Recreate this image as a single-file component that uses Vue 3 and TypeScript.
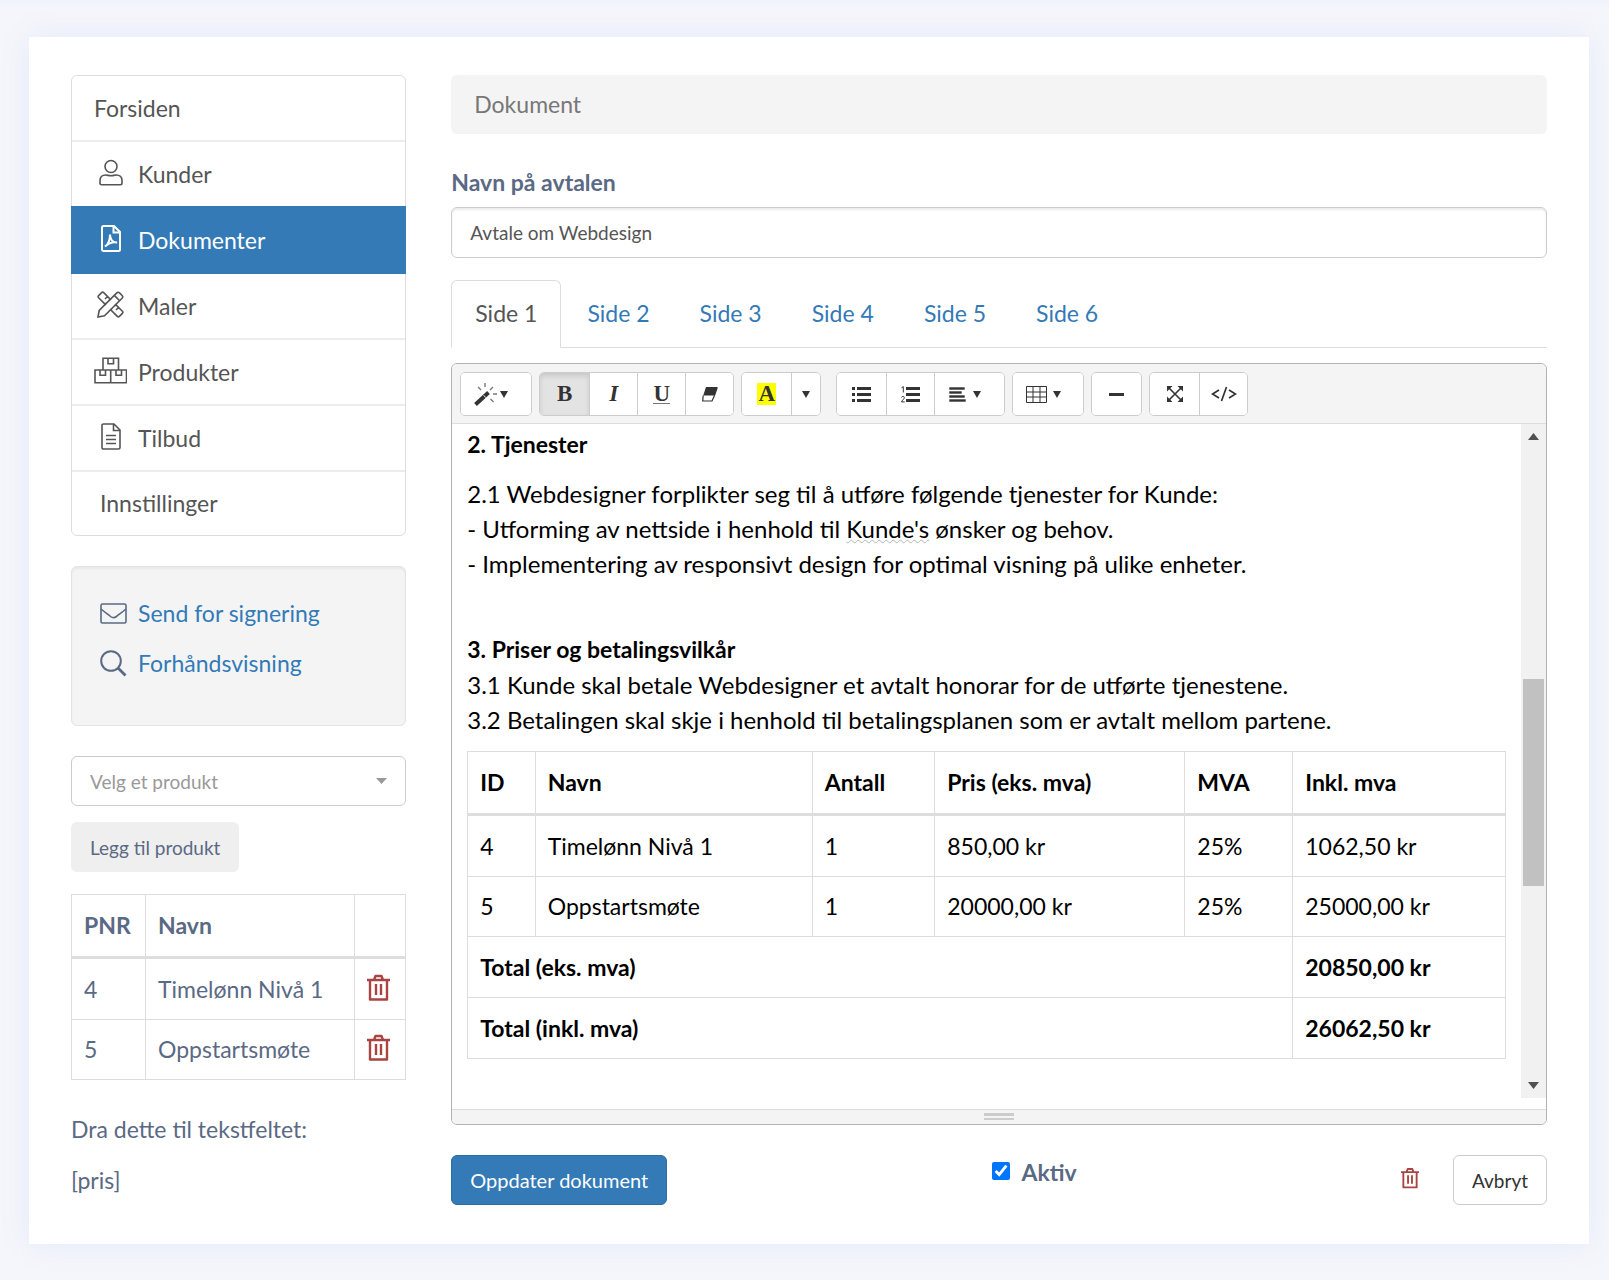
<script setup lang="ts">
import { ref } from 'vue'

interface NavItem {
  label: string
  icon?: string
}
interface Product {
  id: number
  name: string
  qty: number
  price: string
  vat: string
  total: string
}

const navItems: NavItem[] = [
  { label: 'Forsiden' },
  { label: 'Kunder', icon: 'user' },
  { label: 'Dokumenter', icon: 'pdf' },
  { label: 'Maler', icon: 'tools' },
  { label: 'Produkter', icon: 'boxes' },
  { label: 'Tilbud', icon: 'file' },
  { label: 'Innstillinger' },
]
const activeNav = ref('Dokumenter')

const pages = ['Side 1', 'Side 2', 'Side 3', 'Side 4', 'Side 5', 'Side 6']
const activePage = ref('Side 1')

const products: Product[] = [
  { id: 4, name: 'Timelønn Nivå 1', qty: 1, price: '850,00 kr', vat: '25%', total: '1062,50 kr' },
  { id: 5, name: 'Oppstartsmøte', qty: 1, price: '20000,00 kr', vat: '25%', total: '25000,00 kr' },
]

const agreementName = ref('Avtale om Webdesign')
const chosenProduct = ref('')
const active = ref(true)
const bold = ref(true)
</script>

<template>
  <svg class="sprite" aria-hidden="true">
    <symbol id="trash" viewBox="0 0 23 27">
      <path d="M0 6h23M7 6l1.500-4h6L16 6M3 6v19.500h17V6M9 10v11M14 10v11" fill="none" stroke="currentColor" stroke-width="2.400" stroke-linejoin="round" />
    </symbol>
    <symbol id="caret" viewBox="0 0 8 7"><path d="M0 0h8L4 7z" fill="currentColor" /></symbol>
  </svg>

  <main class="card">
    <aside class="side">
      <nav class="nav" aria-label="Meny">
        <a
          v-for="item in navItems"
          :key="item.label"
          href="#"
          class="nav-item"
          :class="{ active: item.label === activeNav, last: item.label === 'Innstillinger' }"
          @click.prevent="activeNav = item.label"
        >
          <span v-if="item.icon" class="nav-icon">
            <svg v-if="item.icon === 'user'" width="24" height="27" viewBox="0 0 24 27">
              <circle cx="12" cy="7.500" r="6" />
              <path d="M1 24v-2.500C1 18 3.500 16 6.500 16c2 0 3 .8 5.500.8s3.500-.8 5.500-.8c3 0 5.500 2 5.500 5.500V24c0 1-.7 1.700-1.700 1.700H2.700C1.700 25.700 1 25 1 24z" />
            </svg>
            <svg v-else-if="item.icon === 'pdf'" width="20" height="27" viewBox="0 0 20 27" class="thick">
              <path d="M1 2.500C1 1.600 1.600 1 2.500 1H13l6 6v17.500c0 .9-.6 1.500-1.500 1.500h-15C1.600 26 1 25.400 1 24.500zM12.500 1v6.500H19" />
              <path d="M4 21.500c3-2 5-6 5-12 0 4.500 2.500 8.500 7 8-4.500-1-8 .5-12 4z" />
            </svg>
            <svg v-else-if="item.icon === 'tools'" width="27" height="27" viewBox="0 0 27 27">
              <path d="M9.500 12 8.200 13.300 1.600 6.700c-.7-.7-.7-1.400 0-2.100l3-3c.7-.7 1.400-.7 2.100 0l6.600 6.600L12 9.500M8 8l2.300-2.300M15 17.500l-1.300 1.300 6.600 6.600c.7.700 1.400.7 2.100 0l3-3c.7-.7.7-1.400 0-2.100l-6.600-6.600-1.300 1.300M19 19l2.300-2.300" />
              <path d="M1 26l1.200-6.500L19.800 1.900c.8-.8 1.900-.8 2.700 0l2.600 2.600c.8.8.8 1.900 0 2.700L7.500 24.800zM17.300 4.400l5.300 5.300" />
            </svg>
            <svg v-else-if="item.icon === 'boxes'" width="33" height="27" viewBox="0 0 33 27">
              <path d="M9 13V1.200h15.500V13M1 13h31.500v12.800H1zM16.700 13v12.800M14 1.200v5.500h5.500V1.200M6 13v5.300h5.500V13M22 13v5.300h5.500V13" />
            </svg>
            <svg v-else width="20" height="27" viewBox="0 0 20 27">
              <path d="M1 2.500C1 1.600 1.600 1 2.500 1H13l6 6v17.500c0 .9-.6 1.500-1.500 1.500h-15C1.600 26 1 25.400 1 24.500zM12.500 1v6.500H19M5 12.500h10M5 16.500h10M5 20.500h10" />
            </svg>
          </span>
          <span>{{ item.label }}</span>
        </a>
      </nav>

      <div class="well">
        <div class="well-row">
          <svg width="27" height="21" viewBox="0 0 27 21" fill="none" stroke="currentColor" stroke-width="1.600">
            <rect x="1" y="1" width="25" height="19" rx="1.500" />
            <path d="M1 6c4 3.300 7 5.500 9.500 7.500 2.200 1.700 3.800 1.700 6 0C19 11.500 22 9.300 26 6" />
          </svg>
          <a href="#">Send for signering</a>
        </div>
        <div class="well-row">
          <svg width="27" height="27" viewBox="0 0 27 27" fill="none" stroke="currentColor" stroke-width="2">
            <circle cx="11" cy="11" r="9.800" />
            <path d="M18 18l7.500 7.500" stroke-width="2.800" />
          </svg>
          <a href="#">Forhåndsvisning</a>
        </div>
      </div>

      <div class="select-wrap">
        <select v-model="chosenProduct" aria-label="Velg et produkt">
          <option value="">Velg et produkt</option>
          <option v-for="p in products" :key="p.id" :value="String(p.id)">{{ p.name }}</option>
        </select>
        <svg class="select-caret" width="11" height="6" viewBox="0 0 11 6"><path d="M0 0h11L5.500 6z" fill="currentColor" /></svg>
      </div>
      <button type="button" class="btn btn-muted">Legg til produkt</button>

      <table class="grid-table side-table">
        <colgroup><col class="c-nr" /><col /><col class="c-del" /></colgroup>
        <thead>
          <tr><th>PNR</th><th>Navn</th><th></th></tr>
        </thead>
        <tbody>
          <tr v-for="p in products" :key="p.id">
            <td>{{ p.id }}</td>
            <td>{{ p.name }}</td>
            <td>
              <button type="button" class="icon-btn" :aria-label="'Slett ' + p.name">
                <svg width="23" height="27"><use href="#trash" /></svg>
              </button>
            </td>
          </tr>
        </tbody>
      </table>

      <div class="hints">
        <p>Dra dette til tekstfeltet:</p>
        <p>[pris]</p>
      </div>
    </aside>

    <section class="content">
      <div class="breadcrumb">Dokument</div>

      <label class="field-label" for="agreement">Navn på avtalen</label>
      <input id="agreement" v-model="agreementName" class="text-input" type="text" />

      <div class="tabs">
        <a
          v-for="page in pages"
          :key="page"
          href="#"
          class="tab"
          :class="{ active: page === activePage }"
          @click.prevent="activePage = page"
        >{{ page }}</a>
      </div>

      <div class="editor">
        <div class="toolbar">
          <div class="group">
            <button type="button" class="tool wide" aria-label="Stil">
              <svg width="24" height="24" viewBox="0 0 24 24" fill="none" stroke="currentColor">
                <path d="M1.500 22.500 14.500 10.500" stroke-width="4" />
                <path d="M9.700 13.300l2 2.200" stroke="#fff" stroke-width="1" />
                <path d="M4 5l3 3M11 1v4M19 5l-3 3M19 12h4M16.500 17l3 3" stroke-width="1.400" stroke="#777" />
              </svg>
              <svg class="caret" width="8" height="7"><use href="#caret" /></svg>
            </button>
          </div>
          <div class="group">
            <button type="button" class="tool serif" :class="{ pressed: bold }" aria-label="Fet" @click="bold = !bold"><b>B</b></button>
            <button type="button" class="tool serif" aria-label="Kursiv"><b><i>I</i></b></button>
            <button type="button" class="tool serif" aria-label="Understrek"><b class="under">U</b></button>
            <button type="button" class="tool" aria-label="Fjern formatering">
              <svg width="16" height="16" viewBox="0 0 16 16">
                <path d="M4 1h11.500L12.500 9.500H1.200z" fill="currentColor" />
                <path d="M1.200 9.500.7 15h9.300l2.500-5.500 2.700-8" fill="none" stroke="currentColor" stroke-width="1.200" />
              </svg>
            </button>
          </div>
          <div class="group group-color">
            <button type="button" class="tool serif" aria-label="Farge"><b class="mark">A</b></button>
            <button type="button" class="tool slim" aria-label="Flere farger"><svg width="8" height="7"><use href="#caret" /></svg></button>
          </div>
          <div class="group">
            <button type="button" class="tool" aria-label="Punktliste">
              <svg width="19" height="17" viewBox="0 0 19 17" fill="currentColor">
                <path d="M0 1h3v3H0zM0 7h3v3H0zM0 13h3v3H0zM5 1h14v3H5zM5 7h14v3H5zM5 13h14v3H5z" />
              </svg>
            </button>
            <button type="button" class="tool" aria-label="Nummerert liste">
              <svg width="19" height="17" viewBox="0 0 19 17" fill="currentColor">
                <path d="M5 1h14v3H5zM5 7h14v3H5zM5 13h14v3H5z" />
                <path d="M.5 1.800 2.300.6V6.500M.5 11.500c.4-1.500 3-1.400 2.800.3C3.200 13 .8 14.500.5 15.900h3.200" fill="none" stroke="currentColor" stroke-width="1" />
              </svg>
            </button>
            <button type="button" class="tool wide" aria-label="Avsnitt">
              <svg width="18" height="16" viewBox="0 0 18 16" fill="currentColor">
                <path d="M0 1h16v3H0zM0 5h13v3H0zM0 9h16v3H0zM0 13h17v3H0z" stroke="#fff" stroke-width=".6" />
              </svg>
              <svg class="caret gap" width="8" height="7"><use href="#caret" /></svg>
            </button>
          </div>
          <div class="group">
            <button type="button" class="tool wide" aria-label="Tabell">
              <svg width="21" height="17" viewBox="0 0 21 17" fill="none" stroke="currentColor">
                <path d="M.5.500h20v16H.5zM.5 6h20M.5 11h20M7 .5v16M14 .5v16" />
              </svg>
              <svg class="caret gap" width="8" height="7"><use href="#caret" /></svg>
            </button>
          </div>
          <div class="group">
            <button type="button" class="tool" aria-label="Horisontal linje">
              <svg width="15" height="3" viewBox="0 0 15 3"><path d="M0 0h15v3H0z" fill="currentColor" /></svg>
            </button>
          </div>
          <div class="group">
            <button type="button" class="tool" aria-label="Fullskjerm">
              <svg width="16" height="16" viewBox="0 0 16 16">
                <path d="M2 2l12 12M14 2 2 14" stroke="currentColor" stroke-width="1.600" />
                <path d="M0 0h5.500L0 5.500zM16 0v5.500L10.500 0zM0 16v-5.500L5.500 16zM16 16h-5.500l5.500-5.500z" fill="currentColor" />
              </svg>
            </button>
            <button type="button" class="tool" aria-label="Kode">
              <svg width="26" height="16" viewBox="0 0 26 16" fill="none" stroke="currentColor" stroke-width="1.700">
                <path d="M8 4 1.500 8 8 12M18 4l6.500 4-6.500 4M15.500 1l-5 14" />
              </svg>
            </button>
          </div>
        </div>

        <div class="edit-area">
          <div class="doc" contenteditable="true" spellcheck="false">
            <p><strong>2. Tjenester</strong></p>
            <p>
              2.1 Webdesigner forplikter seg til å utføre følgende tjenester for Kunde:<br />
              - Utforming av nettside i henhold til <span class="misspelt">Kunde's</span> ønsker og behov.<br />
              - Implementering av responsivt design for optimal visning på ulike enheter.
            </p>
            <p class="section">
              <strong>3. Priser og betalingsvilkår</strong><br />
              3.1 Kunde skal betale Webdesigner et avtalt honorar for de utførte tjenestene.<br />
              3.2 Betalingen skal skje i henhold til betalingsplanen som er avtalt mellom partene.
            </p>
            <table class="grid-table">
              <colgroup>
                <col style="width: 6.5%" /><col style="width: 26.7%" /><col style="width: 11.8%" />
                <col style="width: 24.1%" /><col style="width: 10.4%" /><col style="width: 20.5%" />
              </colgroup>
              <thead>
                <tr>
                  <th>ID</th><th>Navn</th><th>Antall</th><th>Pris (eks. mva)</th><th>MVA</th><th>Inkl. mva</th>
                </tr>
              </thead>
              <tbody>
                <tr v-for="p in products" :key="p.id">
                  <td>{{ p.id }}</td>
                  <td>{{ p.name }}</td>
                  <td>{{ p.qty }}</td>
                  <td>{{ p.price }}</td>
                  <td>{{ p.vat }}</td>
                  <td>{{ p.total }}</td>
                </tr>
                <tr><th colspan="5">Total (eks. mva)</th><th>20850,00 kr</th></tr>
                <tr><th colspan="5">Total (inkl. mva)</th><th>26062,50 kr</th></tr>
              </tbody>
            </table>
          </div>
          <div class="scrollbar" aria-hidden="true">
            <svg width="11" height="7" viewBox="0 0 11 7"><path d="M0 7h11L5.500 0z" fill="#505050" /></svg>
            <div class="track"><div class="thumb"></div></div>
            <svg width="11" height="7" viewBox="0 0 11 7"><path d="M0 0h11L5.500 7z" fill="#505050" /></svg>
          </div>
        </div>
        <div class="statusbar"><span class="grip"></span></div>
      </div>

      <div class="actions">
        <div class="actions-start">
          <button type="button" class="btn btn-primary">Oppdater dokument</button>
        </div>
        <label class="check"><input v-model="active" type="checkbox" />Aktiv</label>
        <div class="actions-end">
          <button type="button" class="icon-btn" aria-label="Slett dokument">
            <svg width="18" height="22"><use href="#trash" /></svg>
          </button>
          <button type="button" class="btn btn-default">Avbryt</button>
        </div>
      </div>
    </section>
  </main>
</template>

<style>
body {
  background: linear-gradient(#edf2fc, #f5f6fb 8px) no-repeat #f5f6fb;
}
</style>

<style scoped>
.sprite {
  position: absolute;
  width: 0;
  height: 0;
}
.card,
.card * {
  box-sizing: border-box;
}
.card {
  display: grid;
  grid-template-columns: repeat(12, minmax(0, 1fr));
  column-gap: 45px;
  margin: 37px 20px 35px 29px;
  padding: 38px 42px 39px;
  background: #fff;
  box-shadow: 0 0 30px rgba(65, 140, 234, 0.1);
  font: 23px/35px Lato, "Liberation Sans", sans-serif;
  color: #5a6984;
}
button,
input,
select {
  font-family: inherit;
}
a {
  color: #337ab7;
  text-decoration: none;
}
p {
  margin: 0;
}
.side {
  grid-column: span 3;
}
.content {
  grid-column: span 9;
}

/* Navigation */
.nav {
  border: 1px solid #ddd;
  border-radius: 6px;
}
.nav-item {
  display: flex;
  align-items: center;
  gap: 11px;
  height: 66px;
  padding-left: 22px;
  border-bottom: 2px solid #ececec;
  color: #555;
}
.nav-item.last {
  height: 63px;
  padding-left: 28px;
  border-bottom: 0;
}
.nav-item.active {
  margin: -2px -1px 0;
  height: 68px;
  padding-left: 23px;
  border-bottom: 0;
  background: #337ab7;
  color: #fff;
}
.nav-icon {
  display: flex;
  justify-content: center;
  width: 33px;
  padding-bottom: 3px;
}
.nav-icon svg {
  fill: none;
  stroke: currentColor;
  stroke-width: 1.6px;
}
.nav-icon .thick {
  stroke-width: 2px;
}

/* Shortcuts */
.well {
  height: 160px;
  margin-top: 30px;
  padding: 21px 28px;
  border: 1px solid #e3e3e3;
  border-radius: 6px;
  background: #f4f4f4;
  box-shadow: inset 0 2px 2px rgba(0, 0, 0, 0.05);
}
.well-row {
  display: flex;
  align-items: center;
  gap: 11px;
  height: 50px;
}

.select-wrap {
  position: relative;
  margin: 30px 0 16px;
}
.select-wrap select {
  display: block;
  width: 100%;
  height: 50px;
  padding: 0 18px;
  border: 1px solid #ccc;
  border-radius: 6px;
  background: #fff;
  color: #999;
  font-size: 19px;
  appearance: none;
}
.select-caret {
  position: absolute;
  right: 19px;
  top: 22px;
  color: #999;
  pointer-events: none;
}

.btn {
  height: 50px;
  padding: 0 18px;
  border: 1px solid transparent;
  border-radius: 6px;
  font-size: 19px;
}
.btn-muted {
  background: #efefef;
  color: #5a6984;
}
.btn-primary {
  border-color: #2e6da4;
  background: #337ab7;
  color: #fff;
  font-size: 20px;
}
.btn-default {
  border-color: #ccc;
  background: #fff;
  color: #333;
}
.icon-btn {
  display: block;
  padding: 0 0 4px;
  border: 0;
  background: none;
  color: #a94442;
}
.icon-btn svg {
  display: block;
}

/* Tables */
.grid-table {
  width: 100%;
  table-layout: fixed;
  border-collapse: collapse;
}
.grid-table th,
.grid-table td {
  padding: 12px;
  border: 1px solid #ddd;
  text-align: left;
}
.grid-table thead th {
  padding: 13px 12px;
  border-bottom: 3px solid #ddd;
}
.grid-table tbody th,
.grid-table tbody tr:first-child > * {
  padding-top: 13px;
}
.side-table {
  margin: 22px 0 32px;
}
.c-nr {
  width: 74px;
}
.c-del {
  width: 51px;
}
.hints {
  display: grid;
  gap: 16px;
}

/* Form */
.breadcrumb {
  padding: 12px 23px;
  border-radius: 6px;
  background: #f4f4f4;
  color: #777;
}
.field-label {
  display: block;
  margin: 31px 0 7px;
  font-weight: bold;
}
.text-input {
  display: block;
  width: 100%;
  height: 51px;
  padding: 0 18px;
  border: 1px solid #ccc;
  border-radius: 6px;
  box-shadow: inset 0 2px 2px rgba(0, 0, 0, 0.08);
  color: #555;
  font-size: 19px;
}
.tabs {
  display: flex;
  gap: 2px;
  margin-top: 22px;
  border-bottom: 1px solid #ddd;
}
.tab {
  margin-bottom: -1px;
  padding: 15px 23px 16px;
  border: 1px solid transparent;
  border-radius: 6px 6px 0 0;
}
.tab.active {
  border-color: #ddd;
  border-bottom-color: #fff;
  background: #fff;
  color: #555;
}

/* Editor */
.editor {
  margin-top: 15px;
  border: 1px solid #b2b2b2;
  border-radius: 6px;
  overflow: hidden;
}
.toolbar {
  display: flex;
  flex-wrap: wrap;
  gap: 7px;
  padding: 8px 8px 7px;
  border-bottom: 1px solid #ddd;
  background: #f4f4f4;
}
.group {
  display: flex;
  border: 1px solid #ccc;
  border-radius: 5px;
  background: #fff;
  overflow: hidden;
}
.group-color {
  margin-right: 8px;
}
.tool {
  display: flex;
  align-items: center;
  justify-content: center;
  width: 49px;
  height: 42px;
  padding: 0;
  border: 0;
  background: #fff;
  color: #333;
}
.tool + .tool {
  width: 48px;
  border-left: 1px solid #ccc;
}
.tool.wide {
  width: 70px;
  padding-right: 10px;
}
.tool + .tool.slim {
  width: 29px;
}
.tool + .tool.wide {
  width: 70px;
}
.tool.pressed {
  background: #e3e3e3;
  box-shadow: inset 0 3px 5px rgba(0, 0, 0, 0.12);
}
.caret {
  margin-left: 2px;
}
.caret.gap {
  margin-left: 6px;
}
.serif {
  font: 23px/24px "Liberation Serif", serif;
}
.under {
  border-bottom: 1px solid #777;
  line-height: 19px;
}
.mark {
  padding: 0 1px;
  background: #ff0;
  line-height: 22px;
}
.edit-area {
  display: flex;
  align-items: flex-start;
  height: 685px;
}
.doc {
  flex: 1;
  min-width: 0;
  padding: 2px 15px 0;
  color: #000;
  outline: none;
}
.doc p {
  margin-bottom: 14px;
  font-size: 24px;
}
.doc p strong {
  font-size: 23px;
}
.doc .section {
  margin: 50px 0 14px;
}
.misspelt {
  text-decoration: underline wavy #b4b4b4 1px;
}
.scrollbar {
  display: flex;
  flex-direction: column;
  align-items: center;
  width: 25px;
  height: 674px;
  padding: 9px 0;
  background: #f1f1f1;
}
.track {
  flex: 1;
  width: 21px;
  padding-top: 239px;
}
.thumb {
  height: 207px;
  background: #c1c1c1;
}
.statusbar {
  display: flex;
  justify-content: center;
  height: 15px;
  padding-top: 3px;
  border-top: 1px solid #ddd;
  background: #f4f4f4;
}
.grip {
  width: 30px;
  height: 7px;
  border: solid #ccc;
  border-width: 3px 0 2px;
}

/* Footer actions */
.actions {
  display: grid;
  grid-template-columns: 1fr auto 1fr;
  margin-top: 30px;
}
.check {
  display: flex;
  gap: 12px;
  margin-left: 70px;
  font-weight: bold;
}
.check input {
  width: 18px;
  height: 18px;
  margin: 7px 0 0;
}
.actions-end {
  display: flex;
  align-items: center;
  justify-content: flex-end;
  gap: 34px;
}
</style>
